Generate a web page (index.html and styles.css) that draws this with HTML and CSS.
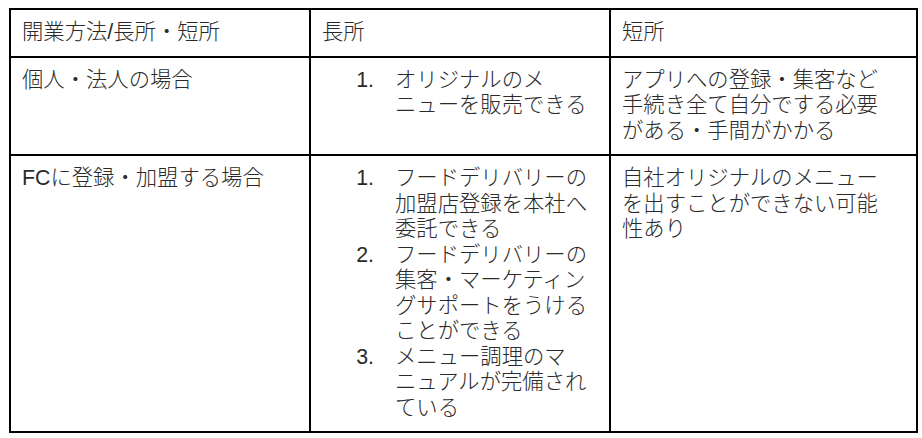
FILE: index.html
```html
<!DOCTYPE html>
<html lang="ja">
<head>
<meta charset="utf-8">
<link rel="stylesheet" href="styles.css">
</head>
<body>
<table class="grid">
  <colgroup>
    <col class="c1">
    <col class="c2">
    <col class="c3">
  </colgroup>
  <tr>
    <td>開業方法/長所・短所</td>
    <td>長所</td>
    <td class="narrow">短所</td>
  </tr>
  <tr>
    <td>個人・法人の場合</td>
    <td>
      <ol class="list">
        <li>オリジナルのメニューを販売できる</li>
      </ol>
    </td>
    <td class="narrow">アプリへの登録・集客など手続き全て自分でする必要がある・手間がかかる</td>
  </tr>
  <tr>
    <td>FCに登録・加盟する場合</td>
    <td>
      <ol class="list">
        <li>フードデリバリーの加盟店登録を本社へ委託できる</li>
        <li>フードデリバリーの集客・マーケティングサポートをうけることができる</li>
        <li>メニュー調理のマニュアルが完備されている</li>
      </ol>
    </td>
    <td class="narrow">自社オリジナルのメニューを出すことができない可能性あり</td>
  </tr>
</table>
</body>
</html>
```

FILE: styles.css
```css
html, body {
  margin: 0;
  background: #fff;
}
body {
  padding: 8px 0 0 9px;
  font-family: "Liberation Sans", Arial, "Noto Sans CJK JP", sans-serif;
  font-size: 21.33px;
  font-weight: 300;
  line-height: 25.5px;
  color: #2a2a2a;
}
.grid {
  border-collapse: collapse;
  table-layout: fixed;
  width: 907px;
}
.c1 { width: 300px; }
.c2 { width: 300px; }
.c3 { width: 307px; }
.grid td {
  border: 2px solid #000;
  padding: 10px 11px;
  vertical-align: top;
  line-break: strict;
}
.grid td.narrow {
  padding-right: 26px;
}
.list {
  margin: 0;
  padding: 0 0 0 73px;
  list-style: none;
  counter-reset: item;
}
.list li {
  counter-increment: item;
}
.list li::before {
  content: counter(item) ".";
  display: inline-block;
  width: 40px;
  margin-left: -40px;
  padding-right: 21px;
  box-sizing: border-box;
  text-align: right;
}
```
